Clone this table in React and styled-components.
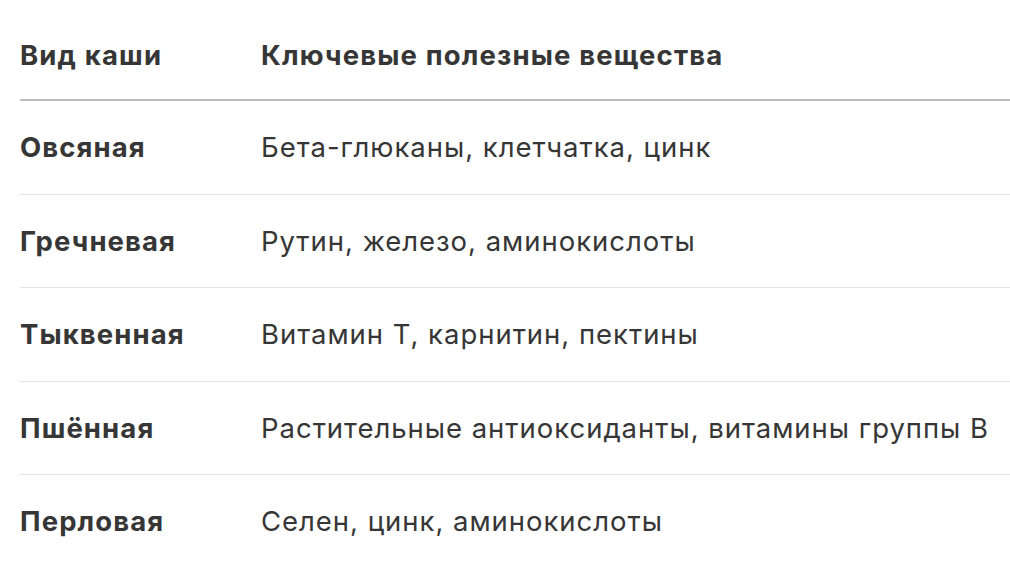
import React from 'react';
import styled, { createGlobalStyle } from 'styled-components';

const GlobalStyle = createGlobalStyle`
  body {
    margin: 0;
    background: #fff;
    font-family: Inter, "Noto Sans", "Liberation Sans", sans-serif;
    color: #363636;
  }
`;

const Wrapper = styled.div`
  padding: 10px 0 0 20px;
`;

const Table = styled.table`
  width: 990px;
  border-collapse: collapse;
  font-size: 27.5px;
`;

const HeadCell = styled.th`
  text-align: left;
  font-weight: 700;
  letter-spacing: 1.15px;
  height: 89px;
  padding: 0;
  color: #363636;
  border-bottom: 2px solid #bdbdbd;
  width: ${props => props.w || 'auto'};
`;

const Row = styled.tr`
  border-bottom: 1px solid #e3e3e3;
  &:last-child { border-bottom: none; }
`;

const Cell = styled.td`
  height: 92.5px;
  padding: 0;
  font-weight: ${props => (props.bold ? 700 : 400)};
  letter-spacing: ${props => (props.bold ? '1.1px' : '0.97px')};
  color: #363636;
`;

const rows = [
  ['Овсяная', 'Бета-глюканы, клетчатка, цинк'],
  ['Гречневая', 'Рутин, железо, аминокислоты'],
  ['Тыквенная', 'Витамин Т, карнитин, пектины'],
  ['Пшённая', 'Растительные антиоксиданты, витамины группы В'],
  ['Перловая', 'Селен, цинк, аминокислоты'],
];

const App = () => (
  <Wrapper>
    <GlobalStyle />
    <Table>
      <thead>
        <tr>
          <HeadCell w="241px">Вид каши</HeadCell>
          <HeadCell>Ключевые полезные вещества</HeadCell>
        </tr>
      </thead>
      <tbody>
        {rows.map(([name, stuff]) => (
          <Row key={name}>
            <Cell bold>{name}</Cell>
            <Cell>{stuff}</Cell>
          </Row>
        ))}
      </tbody>
    </Table>
  </Wrapper>
);

export default App;
